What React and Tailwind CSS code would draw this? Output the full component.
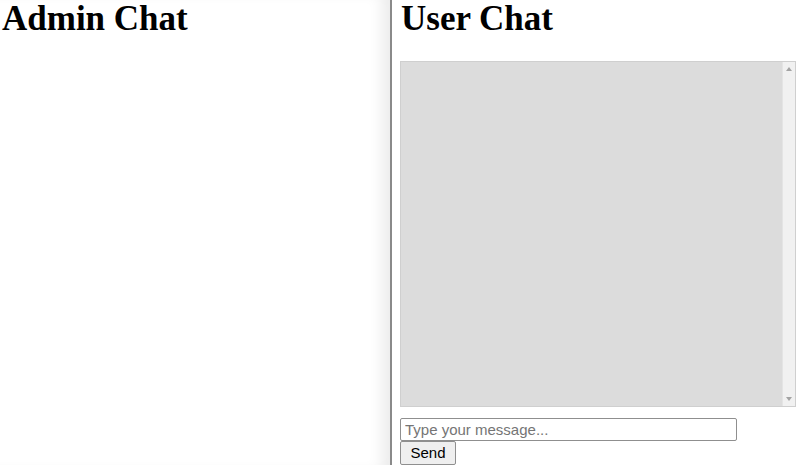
import React, { useState } from "react";

const App = () => {
  const [message, setMessage] = useState("");

  return (
    <div className="flex h-screen w-full overflow-hidden bg-white">
      {/* admin side */}
      <div className="w-[392px] shrink-0 h-full shadow-[inset_-16px_0_14px_-8px_rgba(0,0,0,0.08)] border-r-2 border-[#8a8a8a]">
        <h1 className="m-0 pl-[2px] text-[35px] leading-[37px] font-bold text-black [font-family:'Liberation_Serif',serif]">
          Admin Chat
        </h1>
      </div>

      {/* user side */}
      <div className="flex-1 pl-[8px] h-full">
        <h1 className="m-0 pl-[1px] text-[35px] leading-[37px] font-bold text-black [font-family:'Liberation_Serif',serif]">
          User Chat
        </h1>
        <div className="mt-[24px] w-[396px] h-[346px] flex border border-[#cfcfcf] bg-[#dcdcdc] overflow-hidden">
          <div className="flex-1"></div>
          {/* scrollbar */}
          <div className="w-[13px] h-full bg-[#f1f1f1] border-l border-[#e4e4e4] flex flex-col items-center justify-between py-[5px]">
            <div className="w-0 h-0 border-l-[3px] border-r-[3px] border-b-[4px] border-l-transparent border-r-transparent border-b-[#a3a3a3]"></div>
            <div className="w-0 h-0 border-l-[3px] border-r-[3px] border-t-[4px] border-l-transparent border-r-transparent border-t-[#a3a3a3]"></div>
          </div>
        </div>
        <div className="mt-[11px] [font-family:'Liberation_Sans',Arial,sans-serif]">
          <input
            type="text"
            value={message}
            onChange={(e) => setMessage(e.target.value)}
            placeholder="Type your message..."
            className="block w-[337px] h-[23px] px-[4px] text-[15px] border border-[#8f8f8f] rounded-[2px] text-black placeholder:text-[#757575] outline-none"
          />
          <button className="block w-[56px] h-[24px] text-[15px] bg-[#efefef] border border-[#8f8f8f] rounded-[2px] text-black">
            Send
          </button>
        </div>
      </div>
    </div>
  );
};

export default App;
